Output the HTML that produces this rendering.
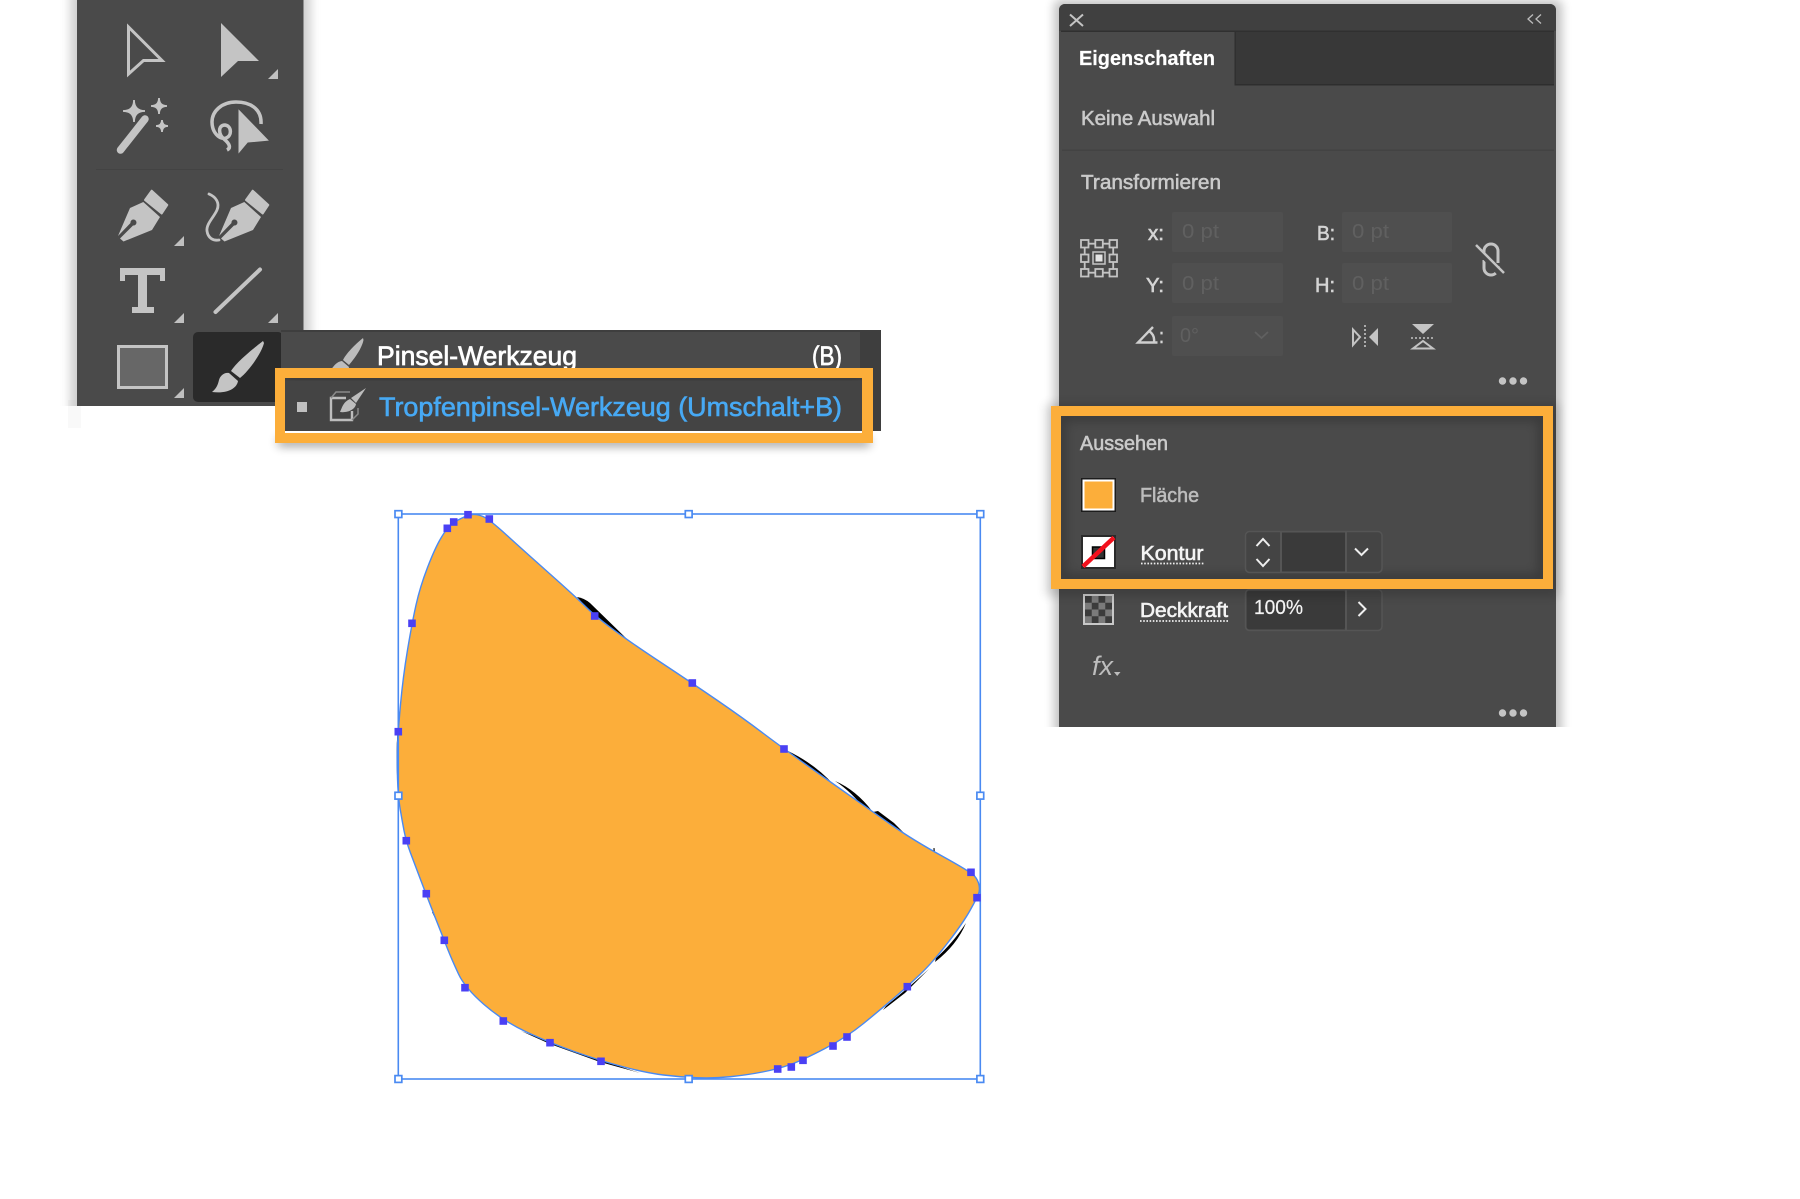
<!DOCTYPE html>
<html><head><meta charset="utf-8"><title>Tropfenpinsel</title>
<style>html,body{margin:0;padding:0;background:#fff}svg{display:block}text{font-family:"Liberation Sans",sans-serif}</style></head>
<body>
<svg xmlns="http://www.w3.org/2000/svg" width="1800" height="1199" viewBox="0 0 1800 1199">
<defs>
<filter id="b8" filterUnits="userSpaceOnUse" x="250" y="410" width="650" height="70"><feGaussianBlur stdDeviation="5"/></filter>
<filter id="b5" x="-20%" y="-20%" width="140%" height="140%"><feGaussianBlur stdDeviation="5"/></filter>
<clipPath id="cp"><rect x="1000" y="0" width="700" height="727"/></clipPath>
<clipPath id="ci1"><rect x="285" y="378" width="577" height="55"/></clipPath>
<clipPath id="ci2"><rect x="1061" y="416" width="482" height="163"/></clipPath>
<clipPath id="ct"><rect x="50" y="0" width="300" height="406"/></clipPath>
<pattern id="chk" x="1085" y="596" width="13.5" height="13.5" patternUnits="userSpaceOnUse"><rect width="13.5" height="13.5" fill="#7b7b7b"/><rect width="6.75" height="6.75" fill="#3c3c3c"/><rect x="6.75" y="6.75" width="6.75" height="6.75" fill="#3c3c3c"/></pattern>
<g id="pen"><path d="M151.7 190.7L167.3 205L161.7 213.5L145 200Z" stroke="#c4c4c4" stroke-width="2" stroke-linejoin="round" fill="#c4c4c4"/><path fill-rule="evenodd" fill="#c4c4c4" d="M143.3 202L160 217L152 230L123.5 241.5L120 238.5L133 225.5A3 3 0 1 0 130.5 223L118 236L130 208Z"/></g>
<path id="tri" d="M0 10L10 0V10Z" fill="#c0c0c0"/>
</defs>
<rect width="1800" height="1199" fill="#fff"/>

<!-- Toolbar -->
<rect x="68" y="400" width="13" height="28" fill="#f9f9f9"/>
<g clip-path="url(#ct)"><rect x="70" y="-10" width="241" height="440" fill="#000" opacity=".18" filter="url(#b5)"/></g>
<rect x="77" y="0" width="226.500" height="406" fill="#4a4a4a"/>
<path d="M128.500 27V74L143.500 60.500H162Z" fill="none" stroke="#c4c4c4" stroke-width="3" stroke-linejoin="miter"/>
<path d="M221 23L259 61H238L221 77Z" fill="#c4c4c4"/>
<use href="#tri" x="268" y="69"/>
<!-- wand -->
<path d="M120.500 150L145 119" stroke="#c4c4c4" stroke-width="7.500" stroke-linecap="round"/>
<path d="M134 100Q134 111 145 111Q134 111 134 122Q134 111 123 111Q134 111 134 100Z M159 98Q159 106 167 106Q159 106 159 114Q159 106 151 106Q159 106 159 98Z M162 120Q162 126 168 126Q162 126 162 132Q162 126 156 126Q162 126 162 120Z" fill="#c4c4c4" stroke="#c4c4c4" stroke-width="1.800"/>
<!-- lasso -->
<path d="M261 124C262 108 249 102 236 102C222 102 212 111 212 122C212 132 219 140 226 138C232 136 232 126 225 125C218 125 218 134 224 139C230 144 231 148 227 150" fill="none" stroke="#c4c4c4" stroke-width="3.500"/>
<path d="M238 108L270 141L248 143L238 155Z" fill="#c4c4c4" stroke="#4a4a4a" stroke-width="1"/>
<rect x="96" y="169" width="187" height="1" fill="#434343"/>
<!-- pens -->
<use href="#pen"/>
<use href="#pen" x="101"/>
<path d="M209 194C216 197 220 203 217 210C214 217 206 224 207 231C208 238 213 241 219 240" fill="none" stroke="#c4c4c4" stroke-width="2.800" stroke-linecap="round"/>
<use href="#tri" x="174" y="236"/>
<!-- T -->
<path d="M120 268H165V281H160V275H147V307H154V313H132V307H138V275H125V281H120Z" fill="#c4c4c4"/>
<use href="#tri" x="174" y="313"/>
<path d="M215.500 312L260 269.500" stroke="#c4c4c4" stroke-width="4" stroke-linecap="round"/>
<use href="#tri" x="268" y="313"/>
<!-- rect -->
<rect x="118.500" y="346.500" width="48" height="41" fill="#676767" stroke="#c4c4c4" stroke-width="3"/>
<use href="#tri" x="174" y="388"/>
<rect x="193" y="332" width="90" height="70" rx="5" fill="#2a2a2a"/>
<path d="M263 341C258 345 238 360 231 371L240 378C250 370 262 352 264 343Z" fill="#c4c4c4"/>
<path d="M229 373L238 381C237 388 228 394 212 392C217 388 218 384 219 380C220 376 224 372 229 373Z" fill="#c4c4c4"/>

<!-- Flyout -->
<rect x="281" y="330" width="600" height="101" fill="#3e3e3e"/>
<rect x="281" y="332" width="579" height="99" fill="#4a4a4a"/>
<path d="M363 338C358 342 347 352 343 360L349 365C355 358 362 348 363.500 340Z M342 361L349 367L348 372H329C333 368 335 362 342 361Z" fill="#bdbdbd"/>
<text x="377" y="365" font-size="26.500" fill="#fff" stroke="#fff" stroke-width=".7" textLength="200" lengthAdjust="spacingAndGlyphs">Pinsel-Werkzeug</text>
<text x="812" y="365" font-size="26.500" fill="#fff" stroke="#fff" stroke-width=".7" textLength="30" lengthAdjust="spacingAndGlyphs">(B)</text>
<!-- flyout orange highlight -->
<rect x="278" y="438" width="592" height="8" fill="#000" opacity=".42" filter="url(#b8)"/>
<rect x="285" y="378" width="577" height="53" fill="#444"/>
<rect x="285" y="431" width="577" height="2" fill="#fff"/>
<g clip-path="url(#ci1)"><rect x="285" y="372" width="577" height="7" fill="#000" opacity=".25" filter="url(#b5)"/></g>
<path fill-rule="evenodd" fill="#fcae3a" d="M275 368H873V443H275Z M285 378V433H862V378Z"/>
<rect x="297" y="402" width="10" height="10" fill="#c0c0c0"/>
<path d="M346 398H331V420H352V411" fill="none" stroke="#bdbdbd" stroke-width="2.400"/>
<path d="M331 398L336 392H350M352 420L358 414V408" fill="none" stroke="#8a8a8a" stroke-width="1.500"/>
<path d="M366 388L351 398L356 403Z" fill="#bdbdbd"/>
<path d="M350 399C343 402 342 408 340 412C347 413 355 410 356 404Z" fill="#bdbdbd"/>
<text x="379" y="416" font-size="26.500" fill="#47a9f4" stroke="#47a9f4" stroke-width=".6" textLength="463" lengthAdjust="spacingAndGlyphs">Tropfenpinsel-Werkzeug (Umschalt+B)</text>

<!-- Blob: black strokes -->
<g fill="#000">
<path d="M577 597Q584 598 590 603L629 641L600 622Z"/>
<path d="M401 700Q394 745 398 790L400 780Q398 745 402 705Z"/>
<path d="M788 751Q815 764 834 785L828 784Z"/>
<path d="M835 781Q856 790 872 811L866 811Q852 792 835 781Z"/>
<path d="M873 812L878 811L894 823L907 836L898 833Z"/>
<path d="M933.500 848V854L935 854L934.500 848Z"/>
<path d="M966 923Q957 945 935 962L936 958Q952 944 966 923Z"/>
<path d="M929 969L905 993L883 1010L886 1006L910 986Z"/>
<path d="M521 1031L550 1044L600 1062L640 1073L600 1060L550 1042Z"/>
<path d="M432 912L443 935L436 912Z"/>
</g>
<!-- Blob fill -->
<path fill="#fcae3a" stroke="#4a8af2" stroke-width="1.400" d="M472.500 514.500Q477 514 483 516.500Q489 519 506 534.500Q523 550 550 574Q577 598 586 607Q595 616 612.500 629Q630 642 661 662.500Q692 683 717.500 700.500Q743 718 763.500 733.500Q784 749 827 779.500Q870 810 891.500 825Q913 840 942 856Q971 872 974.500 876Q978 880 979 885Q980 890 978.500 894Q977 898 970 910.500Q963 923 948 942.500Q933 962 920 974.500Q907 987 893.500 998.500Q880 1010 863.500 1023.500Q847 1037 825 1048.500Q803 1060 790.500 1064.500Q778 1069 762.500 1072Q747 1075 730 1076.750Q713 1078.500 696.500 1077.750Q680 1077 663.500 1075Q647 1073 624 1067Q601 1061 575.500 1052Q550 1043 526.500 1032Q503 1021 484 1004.500Q465 988 458.500 974Q452 960 448 950Q444 940 435 917Q426 894 420.500 879.500Q415 865 410.500 853Q406 841 404 830.500Q402 820 400 808Q398 796 397.500 778Q397 760 397.500 746Q398 732 400.500 704.500Q403 677 407.500 650Q412 623 416 605Q420 587 427.500 567.500Q435 548 441 538Q447 528 450.500 525Q454 522 461 518.500Q468 515 472.500 514.500Z"/>
<!-- bbox -->
<rect x="398.300" y="514" width="582" height="565" fill="none" stroke="#4a8af2" stroke-width="1.600"/>
<g fill="#fff" stroke="#4a8af2" stroke-width="1.700">
<rect x="395" y="510.700" width="6.800" height="6.800"/><rect x="685.300" y="510.700" width="6.800" height="6.800"/><rect x="976.900" y="510.700" width="6.800" height="6.800"/>
<rect x="395" y="792.300" width="6.800" height="6.800"/><rect x="976.900" y="792.300" width="6.800" height="6.800"/>
<rect x="395" y="1075.600" width="6.800" height="6.800"/><rect x="685.300" y="1075.600" width="6.800" height="6.800"/><rect x="976.900" y="1075.600" width="6.800" height="6.800"/>
</g>
<!-- anchors -->
<g fill="#4a40f4" stroke="#4a40f4" stroke-width="1">
<rect x="444" y="525" width="6.600" height="6.600"/><rect x="450.400" y="518.700" width="6.600" height="6.600"/><rect x="464.700" y="511.400" width="6.600" height="6.600"/><rect x="486" y="515.700" width="6.600" height="6.600"/>
<rect x="591.400" y="612.700" width="6.600" height="6.600"/><rect x="689" y="679.700" width="6.600" height="6.600"/><rect x="780.700" y="745.700" width="6.600" height="6.600"/>
<rect x="967.700" y="869" width="6.600" height="6.600"/><rect x="973.700" y="894.400" width="6.600" height="6.600"/>
<rect x="904" y="983.400" width="6.600" height="6.600"/><rect x="843.700" y="1033.700" width="6.600" height="6.600"/><rect x="829.700" y="1042.700" width="6.600" height="6.600"/>
<rect x="799.700" y="1057" width="6.600" height="6.600"/><rect x="788" y="1063.700" width="6.600" height="6.600"/><rect x="774.400" y="1065.700" width="6.600" height="6.600"/>
<rect x="408.700" y="620" width="6.600" height="6.600"/><rect x="395" y="728.400" width="6.600" height="6.600"/>
<rect x="403" y="837.400" width="6.600" height="6.600"/><rect x="423" y="890.400" width="6.600" height="6.600"/><rect x="441" y="937" width="6.600" height="6.600"/>
<rect x="461.700" y="984.400" width="6.600" height="6.600"/><rect x="500" y="1017.700" width="6.600" height="6.600"/><rect x="546.700" y="1039.400" width="6.600" height="6.600"/><rect x="597.700" y="1058" width="6.600" height="6.600"/>
</g>

<!-- Right panel -->
<g clip-path="url(#cp)"><rect x="1054" y="0" width="508" height="760" rx="6" fill="#000" opacity=".24" filter="url(#b5)"/></g>
<path d="M1059 727V10A6 6 0 0 1 1065 4H1550A6 6 0 0 1 1556 10V727Z" fill="#4a4a4a"/>
<path d="M1059 31V10A6 6 0 0 1 1065 4H1550A6 6 0 0 1 1556 10V31Z" fill="#404040"/>
<rect x="1061" y="30.500" width="493" height="1.500" fill="#303030"/>
<rect x="1061" y="32" width="493" height="52" fill="#383838"/>
<rect x="1061" y="84" width="493" height="1.500" fill="#2e2e2e"/>
<rect x="1061" y="32" width="173.500" height="54" fill="#4a4a4a"/>
<rect x="1234.500" y="32" width="1.300" height="53" fill="#2e2e2e"/>
<path d="M1070 14.500L1083 26M1083 14.500L1070 26" stroke="#c4c4c4" stroke-width="2"/>
<path d="M1533 14.500L1528 19L1533 23.500M1541 14.500L1536 19L1541 23.500" fill="none" stroke="#bdbdbd" stroke-width="1.300"/>
<text x="1079" y="65" font-size="20" font-weight="700" fill="#fff" stroke="#fff" stroke-width=".2" textLength="136" lengthAdjust="spacingAndGlyphs">Eigenschaften</text>
<text x="1081" y="125" font-size="20" fill="#cacaca" stroke="#cacaca" stroke-width=".55" textLength="134" lengthAdjust="spacingAndGlyphs">Keine Auswahl</text>
<rect x="1062" y="149.500" width="492" height="1.300" fill="#424242"/>
<text x="1081" y="189" font-size="20" fill="#cacaca" stroke="#cacaca" stroke-width=".55" textLength="140" lengthAdjust="spacingAndGlyphs">Transformieren</text>
<!-- reference point -->
<g fill="none" stroke="#c4c4c4" stroke-width="1.800">
<rect x="1081" y="240" width="7.500" height="7.500"/><rect x="1095.300" y="240" width="7.500" height="7.500"/><rect x="1109.500" y="240" width="7.500" height="7.500"/>
<rect x="1081" y="254.500" width="7.500" height="7.500"/><rect x="1109.500" y="254.500" width="7.500" height="7.500"/>
<rect x="1081" y="269" width="7.500" height="7.500"/><rect x="1095.300" y="269" width="7.500" height="7.500"/><rect x="1109.500" y="269" width="7.500" height="7.500"/>
<path d="M1088.500 243.700H1095.300M1102.800 243.700H1109.500M1088.500 272.700H1095.300M1102.800 272.700H1109.500M1084.700 247.500V254.500M1113.200 247.500V254.500M1084.700 262V269M1113.200 262V269"/>
</g>
<rect x="1093" y="252" width="12" height="12" fill="none" stroke="#c4c4c4" stroke-width="1.500"/>
<rect x="1095.500" y="254.500" width="7" height="7" fill="#e4e4e4"/>
<!-- inputs -->
<g fill="#4f4f4f">
<rect x="1172" y="212" width="111" height="40" rx="2"/><rect x="1342" y="212" width="110" height="40" rx="2"/>
<rect x="1172" y="263" width="111" height="40" rx="2"/><rect x="1342" y="263" width="110" height="40" rx="2"/>
<rect x="1172" y="316" width="111" height="40" rx="2"/>
</g>
<g font-size="20" fill="#606060">
<text x="1182" y="238" textLength="37" lengthAdjust="spacingAndGlyphs">0 pt</text>
<text x="1352" y="238" textLength="37" lengthAdjust="spacingAndGlyphs">0 pt</text>
<text x="1182" y="290" textLength="37" lengthAdjust="spacingAndGlyphs">0 pt</text>
<text x="1352" y="290" textLength="37" lengthAdjust="spacingAndGlyphs">0 pt</text>
<text x="1180" y="342" textLength="19" lengthAdjust="spacingAndGlyphs">0°</text>
</g>
<path d="M1255 332L1261.500 338L1268 332" fill="none" stroke="#606060" stroke-width="1.800"/>
<g font-size="20" fill="#d4d4d4" stroke="#d4d4d4" stroke-width=".6">
<text x="1148" y="240" textLength="16" lengthAdjust="spacingAndGlyphs">x:</text>
<text x="1317" y="240" textLength="18" lengthAdjust="spacingAndGlyphs">B:</text>
<text x="1146" y="292" textLength="18" lengthAdjust="spacingAndGlyphs">Y:</text>
<text x="1315" y="292" textLength="20" lengthAdjust="spacingAndGlyphs">H:</text>
<text x="1159" y="343" textLength="5" lengthAdjust="spacingAndGlyphs">:</text>
</g>
<path d="M1153 327L1138 342.500H1157.500M1149 331Q1155 335 1154 342" fill="none" stroke="#cfcfcf" stroke-width="2.400"/>
<!-- link -->
<path d="M1484 257V251A7 7 0 0 1 1498 251V263M1484 260V268A7 7 0 0 0 1498 268V266" fill="none" stroke="#c4c4c4" stroke-width="3"/>
<path d="M1473 245L1501 275" stroke="#4a4a4a" stroke-width="5"/>
<path d="M1476 245L1504 273" stroke="#c4c4c4" stroke-width="2.500"/>
<!-- flip H/V -->
<path d="M1353 329.500V345L1360 337Z" fill="none" stroke="#c4c4c4" stroke-width="2"/>
<path d="M1378 328V346L1369 337Z" fill="#c4c4c4"/>
<path d="M1365 325V349" stroke="#c4c4c4" stroke-width="1.600" stroke-dasharray="2 2"/>
<path d="M1412 324H1434L1423 334Z" fill="#c4c4c4"/>
<path d="M1413 348.500H1433L1423 341Z" fill="none" stroke="#c4c4c4" stroke-width="2"/>
<path d="M1411 338H1435" stroke="#c4c4c4" stroke-width="1.600" stroke-dasharray="2 2"/>
<g fill="#c4c4c4"><circle cx="1502.500" cy="381" r="3.700"/><circle cx="1513" cy="381" r="3.700"/><circle cx="1523.500" cy="381" r="3.700"/></g>

<!-- Deckkraft row -->
<rect x="1084" y="595" width="29" height="29" fill="url(#chk)" stroke="#c8c8c8" stroke-width="2"/>
<text x="1140" y="617" font-size="20" fill="#f4f4f4" stroke="#f4f4f4" stroke-width=".6" textLength="88" lengthAdjust="spacingAndGlyphs">Deckkraft</text>
<path d="M1140 621H1228" stroke="#eee" stroke-width="1.800" stroke-dasharray="1.600 1.600"/>
<rect x="1245.500" y="589.500" width="136.500" height="41" rx="4" fill="#444" stroke="#555" stroke-width="1.500"/>
<rect x="1247" y="591" width="98" height="38" rx="2" fill="#3a3a3a"/>
<rect x="1345" y="590" width="2" height="40" fill="#555"/>
<text x="1254" y="614" font-size="20" fill="#f4f4f4" stroke="#f4f4f4" stroke-width=".2" textLength="49" lengthAdjust="spacingAndGlyphs">100%</text>
<path d="M1358.500 602L1365.500 609L1358.500 616" fill="none" stroke="#f0f0f0" stroke-width="2"/>
<text x="1092" y="675" font-size="27" font-style="italic" fill="#bdbdbd" font-family="Liberation Sans" textLength="21" lengthAdjust="spacingAndGlyphs">fx</text>
<path d="M1114 672H1120.500L1117.200 676Z" fill="#bdbdbd"/>
<g fill="#c4c4c4"><circle cx="1502.500" cy="713" r="3.700"/><circle cx="1513" cy="713" r="3.700"/><circle cx="1523.500" cy="713" r="3.700"/></g>

<!-- Aussehen highlight -->
<rect x="1046" y="404" width="512" height="192" fill="#000" opacity=".16" filter="url(#b5)"/>
<rect x="1061" y="416" width="482" height="163" fill="#4a4a4a"/>
<g clip-path="url(#ci2)"><rect x="1061" y="416" width="482" height="163" fill="none" stroke="#000" stroke-width="10" opacity=".22" filter="url(#b5)"/></g>
<path fill-rule="evenodd" fill="#fcae3a" d="M1051 406H1553V589H1051Z M1061 416V579H1543V416Z"/>
<text x="1080" y="450" font-size="20" fill="#cacaca" stroke="#cacaca" stroke-width=".55" textLength="88" lengthAdjust="spacingAndGlyphs">Aussehen</text>
<rect x="1081" y="478" width="35" height="34" fill="#1c1c1c"/><rect x="1082.500" y="479.500" width="32" height="31" fill="#fff"/><rect x="1084.500" y="481.500" width="28" height="27" fill="#fcae3a"/>
<text x="1140" y="502" font-size="20" fill="#bcbcbc" stroke="#bcbcbc" stroke-width=".55" textLength="59" lengthAdjust="spacingAndGlyphs">Fläche</text>
<rect x="1081" y="535" width="35" height="34" fill="#2a2a2a"/><rect x="1083" y="537" width="31" height="30" fill="#fff"/>
<rect x="1092.500" y="547" width="12" height="11.500" fill="#333" stroke="#000" stroke-width="1.500"/>
<path d="M1083 566.500L1114 537.500" stroke="#f2101c" stroke-width="4.500"/>
<text x="1140.500" y="560" font-size="20" fill="#f4f4f4" stroke="#f4f4f4" stroke-width=".6" textLength="63" lengthAdjust="spacingAndGlyphs">Kontur</text>
<path d="M1141 563.500H1204" stroke="#eee" stroke-width="1.800" stroke-dasharray="1.600 1.600"/>
<rect x="1245.500" y="531.500" width="136.500" height="41" rx="4" fill="#444" stroke="#555" stroke-width="1.500"/>
<rect x="1282" y="533" width="63" height="38" fill="#3a3a3a"/>
<rect x="1280" y="532" width="2" height="40" fill="#555"/><rect x="1345" y="532" width="2" height="40" fill="#555"/>
<path d="M1256.500 546L1263 539L1269.500 546M1256.500 559L1263 566L1269.500 559M1355 548.500L1361.500 555L1368 548.500" fill="none" stroke="#eee" stroke-width="2"/>
</svg>
</body></html>
